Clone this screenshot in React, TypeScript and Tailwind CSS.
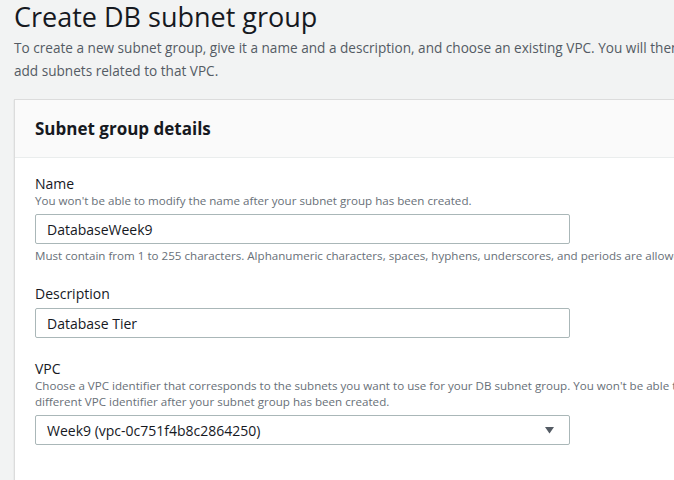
import React from 'react'

const font = { fontFamily: '"Open Sans", "Noto Sans", sans-serif' }

const Field = (prop: any) => {
  const { label, help, children, after, className } = prop
  return (
    <div className={`flex flex-col ${className ?? ''}`}>
      <p className="text-[14px] leading-[18px] text-[#16191f]">{label}</p>
      {help ? <p className="text-[11.6px] leading-[16px] text-[#687078] whitespace-nowrap">{help}</p> : null}
      <div className="mt-[5px]">{children}</div>
      {after ? <p className="mt-[4px] text-[11.6px] leading-[16px] text-[#687078] whitespace-nowrap">{after}</p> : null}
    </div>
  )
}

const Box = (prop: any) => (
  <div className="flex h-[30px] w-[535px] items-center justify-between border border-[#aab7b8] rounded-[2px] bg-white px-[11px] text-[14px] text-[#16191f]">
    <span>{prop.value}</span>
    {prop.select ? (
      <svg width="9" height="7" viewBox="0 0 9 7" className="mr-[4px]">
        <polygon points="0,0 9,0 4.5,6.5" fill="#545b64" />
      </svg>
    ) : null}
  </div>
)

export default function App() {
  return (
    <div className="h-[480px] w-[674px] overflow-hidden bg-[#f2f3f3]" style={font}>
      <div className="pl-[14px]">
        <h1 className="text-[27px] leading-[34px] text-[#16191f] whitespace-nowrap">Create DB subnet group</h1>
        <p className="mt-[2px] text-[13.6px] leading-[23px] text-[#545b64] whitespace-nowrap">
          To create a new subnet group, give it a name and a description, and choose an existing VPC. You will then
          <br />
          add subnets related to that VPC.
        </p>
        <div className="mt-[17px] w-[700px] border-l border-t border-[#dcdcdc] bg-white shadow-[0_1px_1px_rgba(0,28,36,0.2)]">
          <div className="h-[58px] border-b border-[#eaeded] bg-[#fafafa] px-[20px] flex items-center">
            <h2 className="text-[17px] font-bold text-[#16191f]">Subnet group details</h2>
          </div>
          <div className="flex flex-col px-[20px] pt-[17px] pb-[40px]">
            <Field
              label="Name"
              help="You won't be able to modify the name after your subnet group has been created."
              after="Must contain from 1 to 255 characters. Alphanumeric characters, spaces, hyphens, underscores, and periods are allowed."
            >
              <Box value="DatabaseWeek9" />
            </Field>
            <Field label="Description" className="mt-[21px]">
              <Box value="Database Tier" />
            </Field>
            <Field
              label="VPC"
              className="mt-[22px]"
              help={
                <>
                  Choose a VPC identifier that corresponds to the subnets you want to use for your DB subnet group. You won't be able to choose a
                  <br />
                  different VPC identifier after your subnet group has been created.
                </>
              }
            >
              <Box value="Week9 (vpc-0c751f4b8c2864250)" select />
            </Field>
          </div>
        </div>
      </div>
    </div>
  )
}
